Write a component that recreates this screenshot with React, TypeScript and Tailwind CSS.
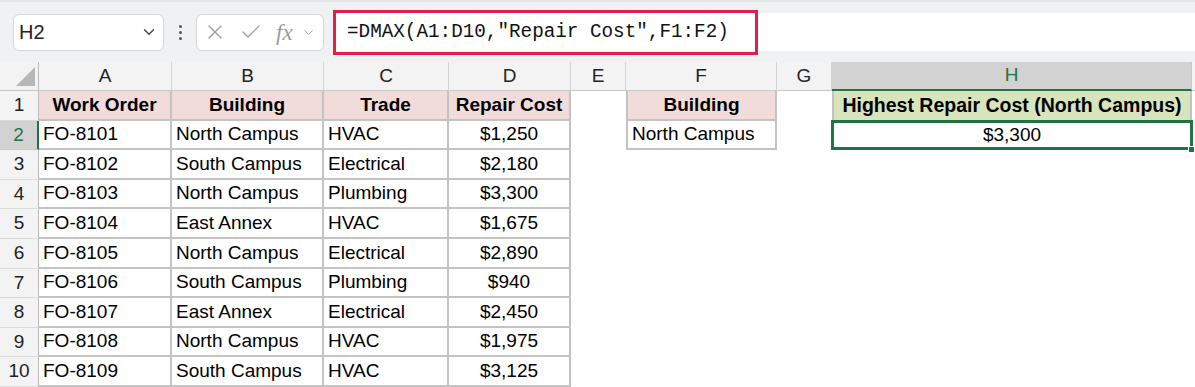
import { X, Check, ChevronDown } from "lucide-react";

const cols = ["A", "B", "C", "D", "E", "F", "G", "H"];

const rows = [
  ["FO-8101", "North Campus", "HVAC", "$1,250"],
  ["FO-8102", "South Campus", "Electrical", "$2,180"],
  ["FO-8103", "North Campus", "Plumbing", "$3,300"],
  ["FO-8104", "East Annex", "HVAC", "$1,675"],
  ["FO-8105", "North Campus", "Electrical", "$2,890"],
  ["FO-8106", "South Campus", "Plumbing", "$940"],
  ["FO-8107", "East Annex", "Electrical", "$2,450"],
  ["FO-8108", "North Campus", "HVAC", "$1,975"],
  ["FO-8109", "South Campus", "HVAC", "$3,125"],
];

const line = "border-[#c3c3c3]";

function RowHead({ n, active }: { n: number; active?: boolean }) {
  if (active) {
    return (
      <div className="flex items-center justify-center bg-[#d2d2d2] text-[#217346] border-r-2 border-r-[#217346] border-b border-b-[#c8c8c8]">
        {n}
      </div>
    );
  }
  return (
    <div className="flex items-center justify-center bg-[#f3f3f3] text-[#222] border-r border-r-[#bcbcbc] border-b border-b-[#dcdcdc]">
      {n}
    </div>
  );
}

export default function App() {
  return (
    <div
      className="w-[1195px] h-[387px] overflow-hidden bg-white text-[19px] text-black"
      style={{ fontFamily: '"Liberation Sans", Arial, sans-serif' }}
    >
      {/* Formula bar */}
      <div className="h-[62px] bg-[#eff1f3] border-t-2 border-[#e4e6e8] flex items-center pl-[13px]">
        <div className="w-[151px] h-[37px] bg-white border border-[#d6d6d6] rounded-[6px] flex items-center justify-between pl-[5px] pr-[5px] text-[20px] text-[#222]">
          <span>H2</span>
          <ChevronDown className="w-[18px] h-[18px] text-[#444]" strokeWidth={1.8} />
        </div>
        <div className="w-[32px] flex flex-col items-center gap-[3px]">
          <span className="w-[3px] h-[3px] rounded-full bg-[#555]" />
          <span className="w-[3px] h-[3px] rounded-full bg-[#555]" />
          <span className="w-[3px] h-[3px] rounded-full bg-[#555]" />
        </div>
        <div className="w-[128px] h-[37px] bg-white border border-[#d6d6d6] rounded-[6px] flex items-center pl-[6px] pr-[4px] text-[#9a9a9a]">
          <X className="w-[24px] h-[24px]" strokeWidth={1.2} />
          <Check className="w-[24px] h-[24px] ml-[12px]" strokeWidth={1.2} />
          <span
            className="ml-[13px] text-[23px] italic leading-none"
            style={{ fontFamily: '"Liberation Serif", "Times New Roman", serif' }}
          >
            fx
          </span>
          <ChevronDown className="w-[15px] h-[15px] ml-[8px]" strokeWidth={1.5} />
        </div>
        <div className="ml-[9px] flex-1 h-[38px] bg-white flex items-center">
          <div
            className="h-[45px] w-[425px] border-[3px] border-[#e0204c] flex items-center pl-[11px] text-[19.3px] text-[#111]"
            style={{ fontFamily: '"Liberation Mono", "DejaVu Sans Mono", monospace' }}
          >
            =DMAX(A1:D10,"Repair Cost",F1:F2)
          </div>
        </div>
      </div>

      {/* Grid */}
      <div className="grid grid-cols-[39px_133px_152px_125px_122px_55px_151px_55px_360px_1fr] grid-rows-[29px_repeat(10,29.6px)]">
        {/* corner */}
        <div className="relative bg-[#f3f3f3] border-r border-r-[#bcbcbc] border-b border-b-[#c8c8c8]">
          <svg className="absolute left-[16px] top-[5px]" width="19" height="19" viewBox="0 0 19 19">
            <polygon points="19,0 19,19 0,19" fill="#b7b7b7" />
          </svg>
        </div>
        {cols.map((c) =>
          c === "H" ? (
            <div
              key={c}
              className="flex items-center justify-center bg-[#d2d2d2] text-[#217346] border-r border-r-[#c8c8c8] border-b-2 border-b-[#217346]"
            >
              {c}
            </div>
          ) : (
            <div
              key={c}
              className="flex items-center justify-center bg-[#f3f3f3] text-[#222] border-r border-r-[#d4d4d4] border-b border-b-[#c8c8c8]"
            >
              {c}
            </div>
          )
        )}
        <div className="bg-[#f3f3f3] border-b border-b-[#c8c8c8]" />

        {/* Row 1 */}
        <RowHead n={1} />
        {["Work Order", "Building", "Trade", "Repair Cost"].map((h) => (
          <div key={h} className={`flex items-center justify-center font-bold bg-[#f2dcdb] border-r-2 border-b-2 ${line}`}>
            {h}
          </div>
        ))}
        <div />
        <div className={`flex items-center justify-center font-bold bg-[#f2dcdb] border-l-2 border-r-2 border-b-2 ${line}`}>
          Building
        </div>
        <div />
        <div className={`flex items-center justify-center font-bold text-[19.5px] bg-[#d8e4bc] border-l-2 border-r-2 ${line}`}>
          Highest Repair Cost (North Campus)
        </div>
        <div />

        {rows.map((r, i) => (
          <Row key={r[0]} n={i + 2} cells={r} />
        ))}
      </div>
    </div>
  );
}

function Row({ n, cells }: { n: number; cells: string[] }) {
  const first = n === 2;
  return (
    <>
      <RowHead n={n} active={first} />
      {cells.map((v, j) => (
        <div
          key={j}
          className={`flex items-center ${j === 3 ? "justify-center" : "pl-[4px]"} whitespace-nowrap border-r-2 border-b-2 ${line}`}
        >
          {v}
        </div>
      ))}
      <div />
      {first ? (
        <div className={`flex items-center pl-[4px] whitespace-nowrap border-l-2 border-r-2 border-b-2 ${line}`}>
          North Campus
        </div>
      ) : (
        <div />
      )}
      <div />
      {first ? (
        <div className="relative flex items-center justify-center">
          $3,300
          <div className="absolute -left-[1px] -top-[1px] -right-[1px] bottom-0 border-[3px] border-[#217346]" />
          <div className="absolute -right-[3px] -bottom-[3px] w-[7px] h-[7px] bg-[#217346] border border-white" />
        </div>
      ) : (
        <div />
      )}
      <div />
    </>
  );
}
